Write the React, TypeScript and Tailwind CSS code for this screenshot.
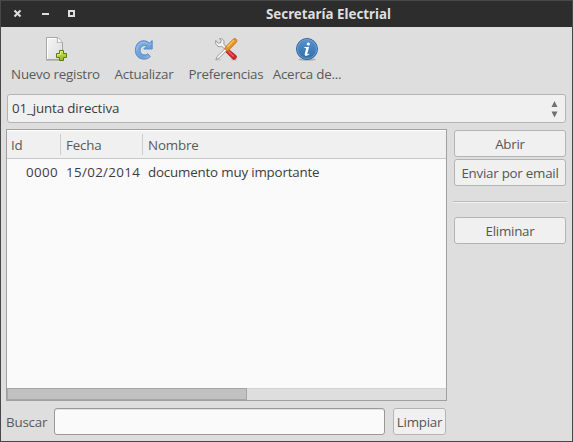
import type { ReactNode } from "react";

function NewIcon() {
  return (
    <svg width="24" height="26" viewBox="0 0 24 26">
      <defs>
        <linearGradient id="page" x1="0" y1="0" x2="1" y2="1">
          <stop offset="0" stopColor="#f8f8f8" />
          <stop offset="1" stopColor="#dadada" />
        </linearGradient>
        <linearGradient id="plus" x1="0" y1="0" x2="0" y2="1">
          <stop offset="0" stopColor="#d3e455" />
          <stop offset="1" stopColor="#8fb81a" />
        </linearGradient>
      </defs>
      <path d="M2 24.500h18" stroke="#bababa" />
      <path d="M2.500 1.500h11l5 5v17h-16z" fill="url(#page)" stroke="#a6a6a6" />
      <path d="M3.500 23V2.500H13" fill="none" stroke="#fff" />
      <path d="M12.500 1.500c1.500 1.500 1 3.500.6 5 1.700-.4 3.900-.4 5.400.6-.5-2-3-5-6-5.600z" fill="#fff" stroke="#a2a2a2" strokeWidth=".8" />
      <path d="M15.500 14.500h4v3h3v4h-3v3h-4v-3h-3v-4h3z" fill="url(#plus)" stroke="#5d7c0c" />
      <path d="M16.500 18.500v-3h2M13.500 20.500v-2h3" fill="none" stroke="#e9f29a" strokeWidth=".8" />
    </svg>
  );
}

function RefreshIcon() {
  return (
    <svg width="24" height="26" viewBox="0 0 24 26">
      <defs>
        <linearGradient id="arc" x1="0" y1="0" x2="1" y2="1">
          <stop offset="0" stopColor="#82b1e0" />
          <stop offset=".65" stopColor="#6a9fd6" />
          <stop offset="1" stopColor="#a9c6e2" />
        </linearGradient>
      </defs>
      <path
        d="M21 4.500v8.500h-8.500l2.900-2.900c-2.600-1.500-6.200.1-6.500 4-.2 4.200 4.500 6.500 7.600 3.600l2.700 2.900c-4.500 4.800-14.800 3.100-15.100-6C4 5.300 12.700 2 18.200 7.100z"
        transform="translate(-.8 0)"
        fill="url(#arc)"
        stroke="#5288c2"
        strokeWidth=".9"
      />
      <path d="M4.700 14.500C4.700 7 12.200 4 17.400 9l1.800-1.900" fill="none" stroke="#a6c9ec" strokeWidth=".8" />
    </svg>
  );
}

function ToolsIcon() {
  return (
    <svg width="24" height="26" viewBox="0 0 24 26">
      <ellipse cx="4" cy="23.800" rx="3.500" ry=".8" fill="#000" opacity=".1" />
      <ellipse cx="20" cy="23.800" rx="3.500" ry=".8" fill="#000" opacity=".14" />
      <path d="M12 11.500l9.700 7.700c2 2-.6 5.300-2.900 3.900L11 15z" fill="#d4242c" stroke="#b01822" strokeWidth=".8" />
      <path d="M13.500 14.500l6.300 6" stroke="#ee6a68" strokeWidth="1.100" />
      <path d="M1.800 4.500l2.500 2.800 2.400-.5.500-2.500L5.500 2.800c3.200-.7 5.500 2 4.200 5.200l3.300 3.500-1.800 2-3.500-3.200C4.300 11.800.8 9 1.800 4.500z" fill="#f3f3f1" stroke="#8c8c8c" strokeWidth=".9" />
      <path d="M11.500 12.200l1.800 1.800-8.300 8.200-3 1.300 1-3z" fill="#f2f2f2" stroke="#8d8d8d" strokeWidth=".8" />
      <path d="M11.300 11.200l7.900-8c1.900-1.800 4.800.9 3.200 3l-7.900 8.200c-2 .8-4.100-1.300-3.200-3.200z" fill="#e69525" stroke="#bd7112" strokeWidth=".8" />
      <path d="M13.300 11l6.700-6.800" stroke="#fac96f" strokeWidth="1.200" />
    </svg>
  );
}

function InfoIcon() {
  return (
    <svg width="24" height="26" viewBox="0 0 24 26">
      <defs>
        <linearGradient id="ball" x1="0" y1="0" x2="0" y2="1">
          <stop offset="0" stopColor="#5b92cf" />
          <stop offset=".5" stopColor="#4180bd" />
          <stop offset="1" stopColor="#2f719f" />
        </linearGradient>
      </defs>
      <ellipse cx="12" cy="23.500" rx="9" ry="1.300" fill="#000" opacity=".2" />
      <circle cx="12" cy="13" r="10.500" fill="url(#ball)" stroke="#2e669f" />
      <circle cx="12" cy="13" r="9.500" fill="none" stroke="#78a6d8" strokeWidth=".8" />
      <circle cx="13.300" cy="8" r="1.600" fill="#fff" />
      <path d="M9.500 11h4.600l-1.800 6.800c-.1.800.7.500 1.700-.3l.5.500c-2 2.300-5.400 2.700-4.700-.2l1.400-5.500-1.900-.4z" fill="#fff" />
    </svg>
  );
}

function Tool({ width, icon, label }: { width: string; icon: ReactNode; label: string }) {
  return (
    <button className={`flex shrink-0 flex-col items-center text-[#5a5a5a] ${width}`}>
      {icon}
      <span className="mt-[3px] h-[18px] whitespace-nowrap leading-[18px] tracking-[-0.22px]">{label}</span>
    </button>
  );
}

function Button({ label, className = "w-full" }: { label: string; className?: string }) {
  return (
    <button className={`h-[27px] shrink-0 whitespace-nowrap rounded-[3px] border border-[#b4b4b4] bg-[#f0f0f0] text-center leading-[26px] tracking-[-0.24px] text-[#555] ${className}`}>
      {label}
    </button>
  );
}

export default function App() {
  return (
    <div className="flex h-[442px] w-[573px] flex-col overflow-hidden border border-[#484848] bg-[#dedede] font-['Open_Sans',sans-serif] text-[13.33px] text-[#3c3c3c]">
      <header className="flex h-[26px] shrink-0 items-center bg-[#2d2d2d]">
        <svg width="84" height="26" viewBox="0 0 84 26" fill="none" stroke="#dedede">
          <path d="M13.500 9.500l6 6M19.500 9.500l-6 6" strokeWidth="2.100" />
          <path d="M41 13h7" strokeWidth="2" />
          <path d="M68 10h5v5h-5z" strokeWidth="2" />
        </svg>
        <h1 className="ml-[181px] whitespace-nowrap font-['Noto_Sans',sans-serif] text-[13.33px] font-bold leading-[26px] text-[#dedede]">Secretaría Electrial</h1>
      </header>
      <nav className="flex h-[66px] shrink-0 pl-1 pt-[9px]">
        <Tool width="w-[101px]" icon={<NewIcon />} label="Nuevo registro" />
        <Tool width="w-[76px]" icon={<RefreshIcon />} label="Actualizar" />
        <Tool width="w-[88px]" icon={<ToolsIcon />} label="Preferencias" />
        <Tool width="w-[74px]" icon={<InfoIcon />} label="Acerca de..." />
      </nav>
      <button className="ml-1.5 mt-px flex h-[29px] w-[559px] shrink-0 items-center justify-between rounded-[3px] border border-[#b4b4b4] bg-[#f0f0f0] pl-1 pr-[7px] text-left">
        <span className="leading-[29px] tracking-[-0.12px]">01_junta directiva</span>
        <svg className="mt-0.5" width="7" height="17" viewBox="0 0 7 17" fill="#707070">
          <path d="M3.500 0L6.500 6h-6zM.5 10.500h6L3.500 16.500z" />
        </svg>
      </button>
      <main className="mt-1.5 flex shrink-0 pl-[5px]">
        <section className="flex h-[272px] w-[441px] flex-col border border-[#a0a0a0] bg-[#fafafa]">
          <div className="flex h-[29px] shrink-0 items-center border-b border-t border-b-[#c8c8c8] border-t-white bg-[#f0f0f0] tracking-[-0.15px] text-[#5a5a5a]">
            <span className="h-[21px] w-[54px] border-r border-[#cdcdcd] pl-1 leading-[22px]">Id</span>
            <span className="h-[21px] w-[82px] border-r border-[#cdcdcd] pl-[5px] leading-[22px]">Fecha</span>
            <span className="h-[21px] pl-[5px] leading-[22px]">Nombre</span>
          </div>
          <div className="flex h-[26px] items-center leading-[28px]">
            <span className="w-[51px] text-right tracking-[0.35px]">0000</span>
            <span className="w-[82px] whitespace-nowrap pl-2 tracking-[0.35px]">15/02/2014</span>
            <span className="whitespace-nowrap pl-2 tracking-[-0.17px]">documento muy importante</span>
          </div>
          <div className="mt-auto h-3 border-t border-[#d2d2d2] bg-[#dedede]">
            <div className="-mt-px h-3 w-[240px] border border-[#a6a6a6] bg-[#c1c1c1]" />
          </div>
        </section>
        <aside className="ml-1.5 w-[114px] px-px pt-px">
          <Button label="Abrir" />
          <Button label="Enviar por email" className="mt-0.5 w-full" />
          <div className="-mx-px mt-[15px] h-0.5 border-b border-t border-b-[#f0f0f0] border-t-[#bdbdbd]" />
          <Button label="Eliminar" className="mt-3.5 w-full" />
        </aside>
      </main>
      <footer className="mt-[7px] flex h-[27px] shrink-0 items-center">
        <label htmlFor="search" className="w-12 shrink-0 pl-[5px] leading-[28px] tracking-[-0.2px] text-[#5a5a5a]">Buscar</label>
        <input id="search" className="ml-[5px] h-[27px] w-[331px] rounded-[3px] border border-[#999] bg-[#fafafa] px-1 shadow-[inset_0_1px_0_#e2e2e2] outline-none" />
        <Button label="Limpiar" className="ml-2 w-[53px]" />
      </footer>
    </div>
  );
}
